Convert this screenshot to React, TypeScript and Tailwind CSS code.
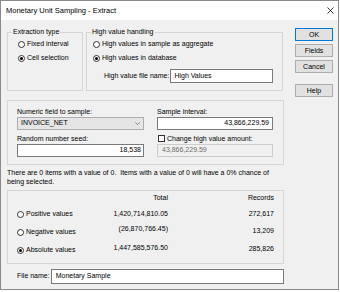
import React from "react";

function Radio({ checked }: { checked?: boolean }) {
  return (
    <span className="w-[7px] h-[7px] rounded-full border border-[#333333] bg-white flex items-center justify-center shrink-0">
      {checked && <span className="w-[3px] h-[3px] rounded-full bg-black" />}
    </span>
  );
}

function Btn({ label, primary, cls }: { label: string; primary?: boolean; cls: string }) {
  return (
    <div
      className={
        "w-[38px] h-[13px] flex items-center justify-center bg-[#e1e1e1] border leading-[9px] " +
        (primary ? "border-[#0078d7] " : "border-[#adadad] ") +
        cls
      }
    >
      {label}
    </div>
  );
}

export default function App() {
  return (
    <div className="w-[340px] h-[292px] bg-white font-['Liberation_Sans',Arial,sans-serif] text-[7px] text-black whitespace-nowrap">
      <div className="w-[339px] h-[290px] border border-[#8a8a8a] bg-[#f0f0f0] flex flex-col">
        {/* Title bar */}
        <div className="h-[19px] bg-white flex items-center justify-between pl-[5px] pr-[4px]">
          <span className="text-[7.5px] leading-[10px]">Monetary Unit Sampling - Extract</span>
          <svg width="7" height="7" viewBox="0 0 7 7">
            <path d="M0.5 0.5 L6.5 6.5 M6.5 0.5 L0.5 6.5" stroke="#000" strokeWidth="0.8" />
          </svg>
        </div>

        {/* Body */}
        <div className="flex flex-1">
          <div className="ml-[6px] w-[277px] flex flex-col">
            {/* Row 1 */}
            <div className="flex mt-[8px] gap-[3px]">
              <fieldset className="border border-[#d5d5d5] w-[76px] h-[63px] m-0 p-0">
                <legend className="ml-[4px] px-[1px] leading-[8px]">Extraction type</legend>
                <div className="mt-[1px] flex flex-col">
                  <div className="h-[14px] flex items-center pl-[10px] gap-[2px]">
                    <Radio />
                    <span>Fixed interval</span>
                  </div>
                  <div className="h-[14px] flex items-center pl-[10px] gap-[2px]">
                    <Radio checked />
                    <span>Cell selection</span>
                  </div>
                </div>
              </fieldset>
              <fieldset className="border border-[#d5d5d5] w-[197px] h-[63px] m-0 p-0">
                <legend className="ml-[4px] px-[1px] leading-[8px]">High value handling</legend>
                <div className="mt-[1px] flex flex-col">
                  <div className="h-[14px] flex items-center pl-[6px] gap-[2px]">
                    <Radio />
                    <span>High values in sample as aggregate</span>
                  </div>
                  <div className="h-[14px] flex items-center pl-[6px] gap-[2px]">
                    <Radio checked />
                    <span>High values in database</span>
                  </div>
                  <div className="mt-[4px] h-[14px] flex items-center pl-[17px] gap-[1px]">
                    <span className="shrink-0">High value file name:</span>
                    <div className="w-[103px] h-[14px] bg-white border border-[#7a7a7a] flex items-center pl-[3px]">
                      High Values
                    </div>
                  </div>
                </div>
              </fieldset>
            </div>

            {/* Row 2 */}
            <div className="mt-[9px] h-[65px] border border-[#d5d5d5] flex pl-[9px] pt-[6px]">
              <div className="w-[127px] flex flex-col">
                <div className="h-[9px] leading-[9px]">Numeric field to sample:</div>
                <div className="mt-[1px] h-[13px] bg-[#e5e5e5] border border-[#adadad] flex items-center justify-between pl-[3px] pr-[3px]">
                  <span>INVOICE_NET</span>
                  <svg width="5" height="3" viewBox="0 0 5 3">
                    <path d="M0.3 0.3 L2.5 2.6 L4.7 0.3" stroke="#606060" strokeWidth="0.7" fill="none" />
                  </svg>
                </div>
                <div className="mt-[4px] h-[9px] leading-[9px]">Random number seed:</div>
                <div className="mt-[1px] h-[13px] bg-white border border-[#7a7a7a] flex items-center justify-end pr-[2px]">
                  18,538
                </div>
              </div>
              <div className="ml-[13px] w-[116px] flex flex-col">
                <div className="h-[9px] leading-[9px]">Sample interval:</div>
                <div className="mt-[1px] h-[13px] bg-white border border-[#7a7a7a] flex items-center justify-end pr-[3px]">
                  43,866,229.59
                </div>
                <div className="mt-[4px] h-[9px] flex items-center gap-[2px] pl-[1px]">
                  <span className="w-[7px] h-[7px] border border-[#333333] bg-white shrink-0" />
                  <span className="leading-[9px]">Change high value amount:</span>
                </div>
                <div className="mt-[1px] h-[13px] bg-[#f0f0f0] border border-[#cccccc] flex items-center pl-[4px] text-[#6d6d6d]">
                  43,866,229.59
                </div>
              </div>
            </div>

            {/* Paragraph */}
            <div className="mt-[3px] leading-[9px]">
              <div>There are 0 items with a value of 0.{"\u00a0 "}Items with a value of 0 will have a 0% chance of</div>
              <div>being selected.</div>
            </div>

            {/* Row 3 */}
            <div className="mt-[4px] h-[74px] border border-[#d5d5d5] flex flex-col pl-[9px]">
              <div className="mt-[2px] h-[9px] flex leading-[9px]">
                <div className="w-[80px]" />
                <div className="w-[71px] text-right">Total</div>
                <div className="w-[106px] text-right">Records</div>
              </div>
              <div className="mt-[3px] flex flex-col">
                <div className="h-[18px] flex items-center">
                  <div className="w-[80px] flex items-center gap-[2px]">
                    <Radio />
                    <span>Positive values</span>
                  </div>
                  <div className="w-[71px] text-right">1,420,714,810.05</div>
                  <div className="w-[106px] text-right">272,617</div>
                </div>
                <div className="h-[18px] flex items-center">
                  <div className="w-[80px] flex items-center gap-[2px]">
                    <Radio />
                    <span>Negative values</span>
                  </div>
                  <div className="w-[71px] text-right pb-[5px]">(26,870,766.45)</div>
                  <div className="w-[106px] text-right pb-[2px]">13,209</div>
                </div>
                <div className="h-[18px] flex items-center">
                  <div className="w-[80px] flex items-center gap-[2px]">
                    <Radio checked />
                    <span>Absolute values</span>
                  </div>
                  <div className="w-[71px] text-right pb-[3px]">1,447,585,576.50</div>
                  <div className="w-[106px] text-right pb-[2px]">285,826</div>
                </div>
              </div>
            </div>

            {/* File name */}
            <div className="mt-[5px] h-[15px] flex items-center pl-[10px] gap-[1px]">
              <span className="shrink-0">File name:</span>
              <div className="flex-1 h-[15px] bg-white border border-[#7a7a7a] flex items-center pl-[4px]">
                Monetary Sample
              </div>
            </div>
          </div>

          {/* Buttons */}
          <div className="ml-[11px] flex flex-col">
            <Btn label="OK" primary cls="mt-[8px]" />
            <Btn label="Fields" cls="mt-[3px]" />
            <Btn label="Cancel" cls="mt-[3px]" />
            <Btn label="Help" cls="mt-[11px]" />
          </div>
        </div>
      </div>
    </div>
  );
}
